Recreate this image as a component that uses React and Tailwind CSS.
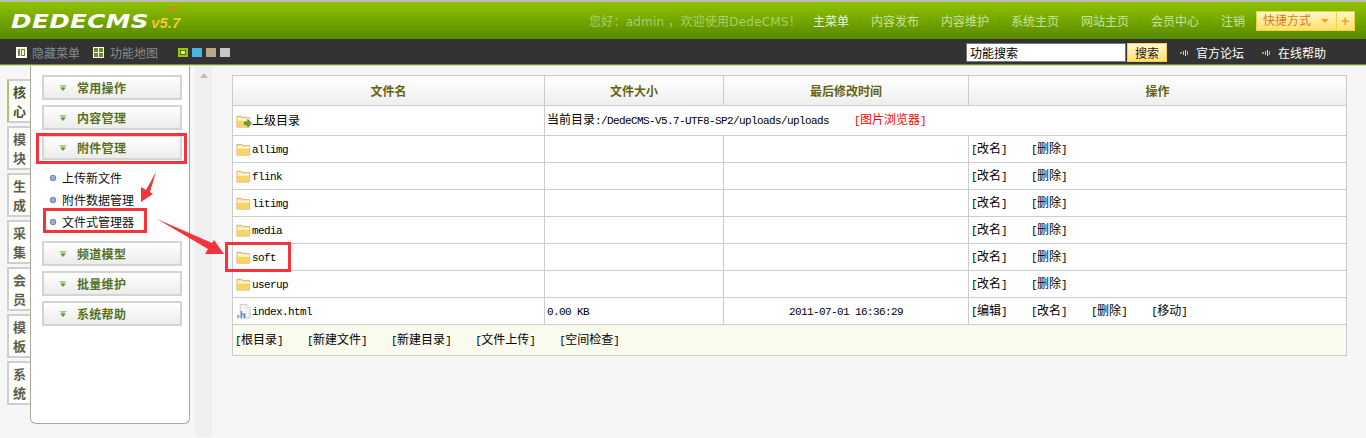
import React from 'react';

const navItems = ['主菜单', '内容发布', '内容维护', '系统主页', '网站主页', '会员中心', '注销'];
const tabs = ['核心', '模块', '生成', '采集', '会员', '模板', '系统'];
const folders = ['allimg', 'flink', 'litimg', 'media', 'soft', 'userup'];
const footerLinks = ['[根目录]', '[新建文件]', '[新建目录]', '[文件上传]', '[空间检查]'];

// ascii is half width in the original, so it gets a mono face squeezed to 6px per char
function Mix({ t }) {
  return t.split(/([\x00-\x7f]+)/).map((part, i) =>
    /^[\x00-\x7f]+$/.test(part) ? (
      <span key={i} className="font-['Liberation_Mono',monospace] text-[11px] tracking-[-0.6px] whitespace-pre">{part}</span>
    ) : (
      <span key={i}>{part}</span>
    )
  );
}

function Folder({ up }) {
  return (
    <svg width="16" height="14" viewBox="0 0 17 15" className="shrink-0">
      <path d="M1 2.500h5l1 1.500h7.500v10H1z" fill="#fbe9b0" stroke="#d9a55a" />
      <path d="M1.500 7h13v6.500h-13z" fill="#f6d560" />
      <path d="M1.500 5h13v2h-13z" fill="#fff6d8" />
      {up && <path d="M9 8.500h3.500V6l4 4-4 4v-2.500H9z" fill="#62a83a" stroke="#3f7a20" strokeWidth="0.7" />}
    </svg>
  );
}

function HtmlIcon() {
  return (
    <svg width="16" height="17" viewBox="0 0 17 17" className="shrink-0">
      <path d="M4.500 1h7l3.500 3.500V15.500h-10.500z" fill="#f4f4f4" stroke="#c8c8c8" />
      <path d="M11.500 1v3.500h3.500" fill="#fff" stroke="#d4d4d4" />
      <path d="M1 12h2.500v3.500H1z" fill="#8fb4e8" />
      <path d="M5 8h1.500v2.500H10v5H8v-3.500H6.500v3.500H5z" fill="#5a8ad8" />
    </svg>
  );
}

function Chevron() {
  return (
    <svg width="8" height="6" viewBox="0 0 8 6" className="shrink-0">
      <path d="M0 0h8L4 3z" fill="#a8c890" />
      <path d="M1 2.500h6L4 6z" fill="#5c9a48" />
    </svg>
  );
}

function Speaker() {
  return (
    <svg width="9" height="8" viewBox="0 0 9 8" className="shrink-0">
      <path d="M0 3h2v2H0z" fill="#c09a20" />
      <path d="M3 2h1v4H3z" fill="#f8d030" />
      <path d="M5 1h1v6H5z" fill="#ffe060" />
      <path d="M7 2h1v4H7z" fill="#e0b830" />
    </svg>
  );
}

function MenuTitle({ title, last }) {
  return (
    <div className={`h-[25px] w-[140px] flex items-center pl-[15px] gap-[10px] border-2 border-[#d4d4d4] bg-gradient-to-b from-white to-[#ececec] text-xs font-bold text-[#56701f] tracking-[0.3px] ${last ? '' : 'mb-[5px]'}`}>
      <Chevron />
      <span className="pt-[3px]">{title}</span>
    </div>
  );
}

function Ops({ items }) {
  return (
    <div className="flex gap-6 pl-[2px] pt-px">
      {items.map((x) => (
        <span key={x}><Mix t={x} /></span>
      ))}
    </div>
  );
}

const cell = 'border border-[#ccc] p-0 align-middle';
const th = `${cell} bg-gradient-to-b from-white to-[#eeeeee] text-xs font-bold text-[#66620f] text-center pt-[2px]`;

export default function App() {
  return (
    <div className="relative w-[1366px] h-[438px] overflow-hidden bg-[#f6f6f6] text-xs leading-none text-black font-['Liberation_Sans','Noto_Sans_CJK_SC',sans-serif]">
      {/* top bar */}
      <div className="h-[2px] bg-[#bdbdbd]" />
      <div className="h-[37px] flex items-center justify-end pr-[11px] bg-gradient-to-b from-[#8fc400] to-[#598900]">
        <div className="mr-auto ml-[11px] flex items-end italic font-bold">
          <span className="font-['DejaVu_Sans',sans-serif] text-[19px] leading-[28px] text-white tracking-[0.3px] scale-x-[1.3] origin-left mr-[31px]">DEDECMS</span>
          <span className="relative font-['Liberation_Sans',sans-serif] text-[15px] leading-[24px] text-[#f0c838] ml-[3px]">
            v5.7
            <span className="absolute right-0 top-[-5px] text-[7px] leading-none font-normal not-italic text-[#f07020]">SP2</span>
          </span>
        </div>
        <span className="font-['DejaVu_Sans','Noto_Sans_CJK_SC',sans-serif] tracking-[0.2px] text-[#a9cf6c] mr-px pt-[2px]">您好：admin ，欢迎使用DedeCMS！</span>
        {navItems.map((item, i) => (
          <span key={item} className={`h-[14px] flex items-center pl-[11px] pr-[10px] border-r border-[#6f9c18] last:border-r-0 last:pr-[11px] pt-[2px] ${i === 0 ? 'text-[#eef5d8]' : 'text-[#cbe0a0]'}`}>
            {item}
          </span>
        ))}
        <div className="flex h-[20px] border border-[#fbd13b] bg-gradient-to-b from-[#fff8c8] to-[#ffdf68] text-[#d87c20]">
          <span className="flex items-center gap-[10px] pl-[6px] pr-[7px] border-r border-[#fbd13b]">
            快捷方式
            <span className="w-0 h-0 border-x-4 border-t-4 border-x-transparent border-t-[#f6a623]" />
          </span>
          <span className="w-[17px] flex items-center justify-center text-[15px] font-bold text-[#f6a623]">+</span>
        </div>
      </div>

      {/* dark bar */}
      <div className="h-[25px] flex items-center bg-[#333333] pl-4 pt-[2px]">
        <span className="w-[11px] h-[11px] bg-white p-[2px] flex gap-[1px]">
          <span className="w-[2px] bg-[#6c8a20]" />
          <span className="flex-1 border border-[#6c8a20]" />
        </span>
        <span className="ml-[5px] pt-[2px] text-[#7d8c9a]">隐藏菜单</span>
        <span className="ml-[13px] w-[11px] h-[11px] bg-white p-[1px] grid grid-cols-2 gap-[1px]">
          <span className="bg-[#6c8a20]" />
          <span className="bg-[#6c8a20]" />
          <span className="bg-[#6c8a20]" />
          <span className="bg-[#6c8a20]" />
        </span>
        <span className="ml-[6px] pt-[2px] text-[#8a8a8a]">功能地图</span>
        <div className="ml-5 flex gap-1">
          <span className="w-[10px] h-[9px] bg-[#9c0] p-[2px]"><span className="block w-full h-full bg-[#dfeeb0] border border-[#557000]" /></span>
          <span className="w-[10px] h-[9px] bg-[#4ab4e0]" />
          <span className="w-[10px] h-[9px] bg-[#b8a888]" />
          <span className="w-[10px] h-[9px] bg-[#c4c8cc]" />
        </div>
        <div className="ml-auto flex items-center mr-10">
          <div className="w-[160px] h-[19px] pt-[2px] bg-white border border-[#777] px-[3px] flex items-center text-black">功能搜索</div>
          <div className="ml-px w-10 h-[19px] pt-[2px] flex items-center justify-center border border-[#fbd13b] bg-gradient-to-b from-[#fff8d0] to-[#ffe070] text-[#222]">搜索</div>
          <span className="ml-[13px]"><Speaker /></span>
          <span className="ml-[7px] pt-[2px] text-white">官方论坛</span>
          <span className="ml-[18px]"><Speaker /></span>
          <span className="ml-[7px] pt-[2px] text-white">在线帮助</span>
        </div>
      </div>
      <div className="h-px bg-[#6f8f33]" />
      <div className="h-px bg-[#cfe0aa]" />

      <div className="flex">
        {/* side tabs */}
        <div className="ml-[7px] w-[23px] pt-[13px] flex flex-col gap-[3px]">
          {tabs.map((t, i) => (
            <div key={t} className={`h-[44px] pt-[2px] flex flex-col items-center justify-center gap-[6px] border-2 border-r-0 border-[#cfcfcf] text-[13px] font-bold text-[#5e5e4a] bg-white ${i === 0 ? 'border-l-[#a8c860] text-[#46501e]' : ''}`}>
              <span>{t[0]}</span>
              <span>{t[1]}</span>
            </div>
          ))}
        </div>

        {/* menu panel */}
        <div className="w-[160px] h-[358px] pl-[11px] pt-[9px] bg-white border-x border-b border-[#a9a996] rounded-b-[6px]">
          <MenuTitle title="常用操作" />
          <MenuTitle title="内容管理" />
          <MenuTitle title="附件管理" last />
          <div className="pt-[7px] pb-[8px]">
            {['上传新文件', '附件数据管理', '文件式管理器'].map((x) => (
              <div key={x} className="h-[22px] flex items-center pl-2 gap-[6px] text-[#111]">
                <span className="w-[6px] h-[6px] rounded-[2px] bg-[#8ab0f0] border border-[#7d8596]" />
                <span className="pt-[2px]">{x}</span>
              </div>
            ))}
          </div>
          <MenuTitle title="频道模型" />
          <MenuTitle title="批量维护" />
          <MenuTitle title="系统帮助" />
        </div>

        {/* scroll strip */}
        <div className="ml-[5px] w-[17px] h-[371px] bg-[#efefef] flex justify-center pt-[7px]">
          <span className="w-0 h-0 border-x-4 border-b-[5px] border-x-transparent border-b-[#bdbdbd]" />
        </div>

        {/* file table */}
        <div className="ml-5 pt-[9px]">
          <table className="w-[1115px] table-fixed border-collapse bg-white text-xs">
            <colgroup>
              <col className="w-[312px]" />
              <col className="w-[179px]" />
              <col className="w-[245px]" />
              <col />
            </colgroup>
            <tbody>
              <tr className="h-[30px]">
                <td className={th}>文件名</td>
                <td className={th}>文件大小</td>
                <td className={th}>最后修改时间</td>
                <td className={th}>操作</td>
              </tr>
              <tr className="h-[30px]">
                <td className={cell}>
                  <div className="flex items-center pl-[3px]"><Folder up /><span>上级目录</span></div>
                </td>
                <td className={cell} colSpan={3}>
                  <div className="pl-[2px] flex">
                    <span><Mix t="当前目录:/DedeCMS-V5.7-UTF8-SP2/uploads/uploads" /></span>
                    <span className="ml-[25px] text-[#f00]"><Mix t="[图片浏览器]" /></span>
                  </div>
                </td>
              </tr>
              {folders.map((f) => (
                <tr key={f} className="h-[27px]">
                  <td className={cell}>
                    <div className="flex items-center pl-[3px]"><Folder /><span><Mix t={f} /></span></div>
                  </td>
                  <td className={cell} />
                  <td className={cell} />
                  <td className={cell}><Ops items={['[改名]', '[删除]']} /></td>
                </tr>
              ))}
              <tr className="h-[27px]">
                <td className={cell}>
                  <div className="flex items-center pl-[3px]"><HtmlIcon /><span><Mix t="index.html" /></span></div>
                </td>
                <td className={cell}><div className="pl-[2px]"><Mix t="0.00 KB" /></div></td>
                <td className={`${cell} text-center`}><Mix t="2011-07-01 16:36:29" /></td>
                <td className={cell}><Ops items={['[编辑]', '[改名]', '[删除]', '[移动]']} /></td>
              </tr>
              <tr className="h-[31px] bg-[#f9fbef]">
                <td className={cell} colSpan={4}>
                  <div className="flex gap-6 pl-[2px] pt-px">
                    {footerLinks.map((x) => (
                      <span key={x}><Mix t={x} /></span>
                    ))}
                  </div>
                </td>
              </tr>
            </tbody>
          </table>
        </div>
      </div>

      {/* red annotations drawn over the screenshot */}
      <div className="absolute left-[36px] top-[133px] w-[151px] h-[31px] border-[3px] border-[#f4333a]" />
      <div className="absolute left-[43px] top-[208px] w-[104px] h-[25px] border-[3px] border-[#f4333a]" />
      <div className="absolute left-[225px] top-[242px] w-[66px] h-[30px] border-[3px] border-[#f4333a]" />
      <svg className="absolute left-0 top-0 pointer-events-none" width="1366" height="438">
        <polygon points="156,172 146,190 141,187 141,202 153,194 150,192" fill="#f4333a" />
        <polygon points="157,219 212,243 214,240 224,254 205,254 208,249" fill="#f4333a" />
      </svg>
    </div>
  );
}
